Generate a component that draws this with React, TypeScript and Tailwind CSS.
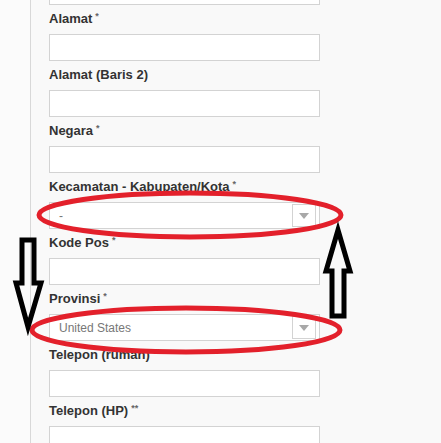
import React from "react";

type Field = { label?: string; req?: string; kind: "input" | "select"; value?: string };

const fields: Field[] = [
  { kind: "input" },
  { label: "Alamat", req: "*", kind: "input" },
  { label: "Alamat (Baris 2)", kind: "input" },
  { label: "Negara", req: "*", kind: "input" },
  { label: "Kecamatan - Kabupaten/Kota", req: "*", kind: "select", value: "-" },
  { label: "Kode Pos", req: "*", kind: "input" },
  { label: "Provinsi", req: "*", kind: "select", value: "United States" },
  { label: "Telepon (rumah)", req: "**", kind: "input" },
  { label: "Telepon (HP)", req: "**", kind: "input" },
];

function Select({ value }: { value: string }) {
  return (
    <div className="flex h-[27px] w-[271px] items-center justify-between border border-[#d3d3d3] bg-white">
      <span className="pl-[9px] text-[12px] text-[#777]">{value}</span>
      <div className="mr-[3px] flex h-[23px] w-[24px] items-center justify-center border border-[#d3d3d3] bg-white">
        <svg width="10" height="6" viewBox="0 0 10 6">
          <polygon points="0,0 10,0 5,6" fill="#a8a8a8" />
        </svg>
      </div>
    </div>
  );
}

export default function App() {
  return (
    <div
      className="relative h-[443px] w-[441px] overflow-hidden bg-[#f9f9f9]"
      style={{ fontFamily: '"Liberation Sans", Arial, sans-serif' }}
    >
      <div className="flex h-full">
        <div className="w-[30px] shrink-0 bg-[#fbfbfb]" />
        <div className="h-full border-l border-[#d8d8d8] pl-[18px]">
          <div className="-mt-[22px]">
            {fields.map((f, i) => (
              <div key={i}>
                {f.label && (
                  <div className="h-[29px] pt-[6px] text-[13px] font-bold leading-[16px] text-[#333]">
                    {f.label}
                    {f.req && (
                      <span className="ml-[3px] align-top text-[9px] font-bold leading-[10px] text-[#666]">
                        {f.req}
                      </span>
                    )}
                  </div>
                )}
                {f.kind === "input" ? (
                  <div className="h-[27px] w-[271px] border border-[#d3d3d3] bg-white" />
                ) : (
                  <Select value={f.value || ""} />
                )}
              </div>
            ))}
          </div>
        </div>
      </div>

      <svg
        className="pointer-events-none absolute left-0 top-0"
        width="441"
        height="443"
        viewBox="0 0 441 443"
      >
        <ellipse cx="190" cy="215" rx="151" ry="22" fill="none" stroke="#e3202b" strokeWidth="5" />
        <ellipse cx="186" cy="330" rx="154" ry="22" fill="none" stroke="#e3202b" strokeWidth="5" />
        <path
          d="M22,240 L34,240 L34,283 L41,283 L28,327 L16,283 L22,283 Z"
          fill="none"
          stroke="#000"
          strokeWidth="5"
          strokeLinejoin="miter"
        />
        <path
          d="M338,230 L350,271 L344,271 L344,316 L332,316 L332,271 L326,271 Z"
          fill="none"
          stroke="#000"
          strokeWidth="5"
          strokeLinejoin="miter"
        />
      </svg>
    </div>
  );
}
